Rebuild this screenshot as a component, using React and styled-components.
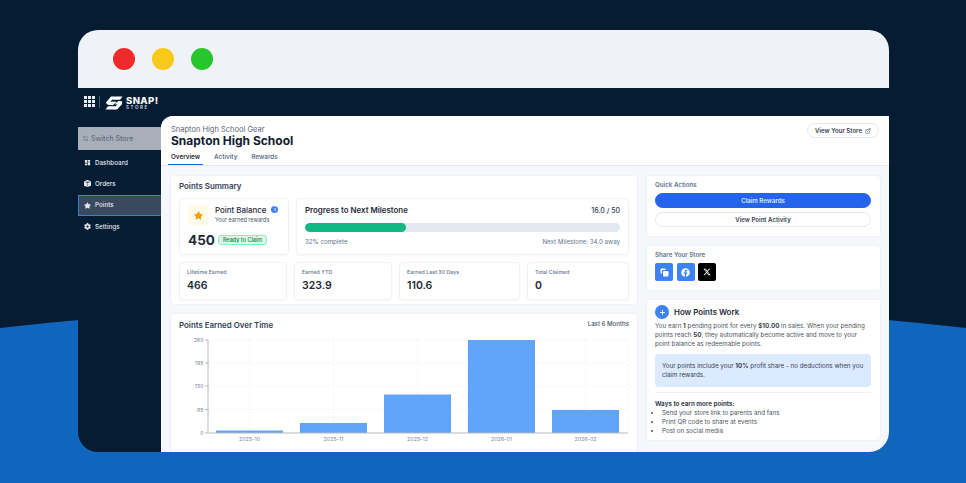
import React from 'react';
import styled, { createGlobalStyle } from 'styled-components';
import { ArrowLeftRight, ExternalLink, Plus } from 'lucide-react';
import { FaStar, FaCog, FaFacebook } from 'react-icons/fa';
import { FaXTwitter } from 'react-icons/fa6';
import { MdDashboard } from 'react-icons/md';
import { BsBoxSeamFill } from 'react-icons/bs';

const GlobalStyle = createGlobalStyle`
  html, body { margin: 0; padding: 0; height: 100%; overflow: hidden; }
  body { background: #051c33; font-family: Inter, "Liberation Sans", sans-serif; color: #1f2937; }
  * { box-sizing: border-box; }
`;

const Page = styled.div`
  position: relative;
  width: 966px;
  height: 483px;
  padding: 30px 77px 31px 78px;
  overflow: hidden;
`;

const Wave = styled.svg`
  position: absolute;
  left: 0;
  bottom: 0;
`;

const Window = styled.div`
  position: relative;
  height: 100%;
  display: flex;
  flex-direction: column;
  border-radius: 20px;
  overflow: hidden;
  background: #051c33;
`;

const TitleBar = styled.div`
  height: 58px;
  flex: none;
  display: flex;
  align-items: center;
  gap: 17px;
  padding-left: 35px;
  background: #eff3f8;
`;

const Dot = styled.span`
  width: 22px;
  height: 22px;
  border-radius: 50%;
  background: ${p => p.$color};
`;

const TopNav = styled.div`
  height: 28px;
  flex: none;
  display: flex;
  align-items: center;
  padding: 2px 0 0 6px;
  color: #fff;
`;

const GridIcon = styled.div`
  display: grid;
  grid-template-columns: repeat(3, 3px);
  grid-auto-rows: 3px;
  gap: 1px;
  margin-top: -3px;
  span { background: #e8edf3; }
`;

const Divider = styled.span`
  width: 1px;
  height: 12px;
  margin: -3px 5px 0 4px;
  background: #47586b;
`;

const BrandText = styled.div`
  display: flex;
  flex-direction: column;
  margin-left: 3px;
  line-height: 1;
`;

const BrandName = styled.span`
  font-size: 9.5px;
  font-weight: 800;
  letter-spacing: 0.4px;
`;

const BrandSub = styled.span`
  margin-top: 1px;
  font-size: 4.5px;
  font-weight: 600;
  letter-spacing: 1.6px;
  color: #d5dce4;
`;

const Main = styled.div`
  flex: 1;
  min-height: 0;
  display: flex;
`;

const Sidebar = styled.nav`
  width: 83px;
  flex: none;
  display: flex;
  flex-direction: column;
  padding-top: 11px;
`;

const SwitchStore = styled.div`
  height: 23px;
  margin-bottom: 2px;
  display: flex;
  align-items: center;
  gap: 2px;
  padding-left: 4px;
  background: #a9afb9;
  color: #626d7c;
  font-size: 7px;
  font-weight: 500;
`;

const NavItem = styled.div`
  height: 21.3px;
  display: flex;
  align-items: center;
  gap: 4px;
  padding-left: 5px;
  color: #e3e8ee;
  font-size: 6.3px;
  font-weight: 500;
  background: ${p => (p.$active ? '#3a4a5e' : 'transparent')};
  border: ${p => (p.$active ? '1px solid #3f7fd1' : '1px solid transparent')};
  border-right-color: transparent;
`;

const Content = styled.div`
  flex: 1;
  min-width: 0;
  display: flex;
  flex-direction: column;
  background: #f5f7fb;
  border-top-left-radius: 12px;
  overflow: hidden;
`;

const Header = styled.header`
  position: relative;
  height: 50px;
  flex: none;
  padding: 8.5px 0 0 10px;
  background: #fff;
  border-bottom: 1px solid #e5e9ef;
`;

const StoreGroup = styled.div`
  font-size: 7.5px;
  line-height: 9px;
  color: #5c6675;
`;

const StoreName = styled.h1`
  margin: 0;
  font-size: 12px;
  line-height: 14px;
  font-weight: 700;
  color: #111c30;
`;

const Tabs = styled.div`
  display: flex;
  gap: 8px;
  margin: 3px 0 0 -3px;
`;

const Tab = styled.div`
  height: 14.5px;
  padding: 0 3px;
  font-size: 6.3px;
  line-height: 12px;
  font-weight: 600;
  color: ${p => (p.$active ? '#1f2937' : '#64748b')};
  border-bottom: ${p => (p.$active ? '1px solid #2563eb' : 'none')};
`;

const StoreButton = styled.button`
  position: absolute;
  top: 7px;
  right: 10px;
  height: 15px;
  padding: 0 7px;
  display: flex;
  align-items: center;
  gap: 3px;
  border: 1px solid #e3e7ee;
  border-radius: 8px;
  background: #fff;
  color: #374151;
  font: 600 6.1px Inter, sans-serif;
`;

const Body = styled.div`
  flex: 1;
  min-height: 0;
  display: grid;
  grid-template-columns: 468px 235px;
  gap: 8px;
  padding: 9px 8px 0 9px;
`;

const Column = styled.div`
  display: flex;
  flex-direction: column;
  gap: 8px;
  min-height: 0;
`;

const Card = styled.section`
  flex: none;
  background: #fff;
  border: 1px solid #eef1f6;
  border-radius: 4px;
  padding: ${p => p.$padding || '5px 8px'};
  height: ${p => p.$height || 'auto'};
`;

const CardTitle = styled.h2`
  margin: 0;
  font-size: 7.9px;
  line-height: 10px;
  font-weight: 600;
  color: #334155;
`;

const TopRow = styled.div`
  display: grid;
  grid-template-columns: 110px 1fr;
  gap: 7px;
  margin-top: 7px;
`;

const Panel = styled.div`
  height: 57px;
  background: #fff;
  border: 1px solid #f0f2f6;
  border-radius: 4px;
  box-shadow: 0 1px 2px rgba(30, 50, 80, 0.04);
`;

const BalancePanel = styled(Panel)`
  padding: 6px 8px;
`;

const BalanceHead = styled.div`
  display: flex;
  gap: 7px;
`;

const StarTile = styled.div`
  width: 20px;
  height: 20px;
  display: flex;
  align-items: center;
  justify-content: center;
  background: #fefae8;
  border-radius: 3px;
  color: #f59e0b;
`;

const BalanceTitle = styled.div`
  display: flex;
  align-items: center;
  gap: 5px;
  font-size: 7.9px;
  line-height: 11px;
  font-weight: 500;
  color: #1f2937;
  white-space: nowrap;
`;

const InfoDot = styled.span`
  width: 7px;
  height: 7px;
  margin-top: -3px;
  border-radius: 50%;
  background: #3b82f6;
  color: #fff;
  font-size: 5px;
  line-height: 7px;
  font-weight: 700;
  text-align: center;
`;

const BalanceSub = styled.div`
  font-size: 5.5px;
  line-height: 8px;
  color: #475569;
  white-space: nowrap;
`;

const BalanceRow = styled.div`
  display: flex;
  align-items: center;
  gap: 3px;
  margin-top: 7px;
`;

const BalanceValue = styled.span`
  font-size: 13.5px;
  line-height: 16px;
  font-weight: 700;
  color: #1f2937;
`;

const ReadyBadge = styled.span`
  height: 10px;
  padding: 0 4px;
  border: 1px solid #86efbe;
  border-radius: 3px;
  background: #d8fbe7;
  color: #15803d;
  font-size: 5.5px;
  line-height: 8px;
  font-weight: 500;
  white-space: nowrap;
`;

const ProgressPanel = styled(Panel)`
  padding: 5px 8px;
`;

const SpreadRow = styled.div`
  display: flex;
  justify-content: space-between;
  align-items: center;
`;

const ProgressTitle = styled.span`
  font-size: 7.9px;
  line-height: 10px;
  font-weight: 600;
  color: #1f2937;
`;

const ProgressCount = styled.span`
  font-size: 7px;
  line-height: 10px;
  padding-top: 2px;
  font-weight: 500;
  color: #334155;
`;

const Track = styled.div`
  height: 9px;
  margin: 7px 0 6px;
  border-radius: 5px;
  background: #e2e8f0;
  overflow: hidden;
`;

const Fill = styled.div`
  height: 100%;
  border-radius: 5px;
  background: #10b981;
`;

const SmallMuted = styled.span`
  font-size: 6.2px;
  line-height: 8px;
  color: #64748b;
`;

const StatRow = styled.div`
  display: grid;
  grid-template-columns: 108px 98px 121px 102px;
  gap: 7px;
  margin-top: 7px;
`;

const Stat = styled.div`
  height: 38px;
  padding: 5px 7px;
  background: #fff;
  border: 1px solid #f0f2f6;
  border-radius: 4px;
  box-shadow: 0 1px 2px rgba(30, 50, 80, 0.04);
`;

const StatLabel = styled.div`
  font-size: 5.3px;
  line-height: 8px;
  font-weight: 500;
  color: #64748b;
`;

const StatValue = styled.div`
  margin-top: 1.5px;
  font-size: 10.5px;
  line-height: 15px;
  font-weight: 600;
  color: #1f2937;
`;

const SideLabel = styled.h3`
  margin: 0;
  font-size: 6.2px;
  line-height: 8px;
  font-weight: 600;
  color: #64748b;
`;

const ActionButton = styled.button`
  display: block;
  width: 100%;
  height: 15px;
  margin-top: 4px;
  border-radius: 8px;
  border: 1px solid ${p => (p.$primary ? '#2563eb' : '#e5e8ee')};
  background: ${p => (p.$primary ? '#2563eb' : '#fff')};
  color: ${p => (p.$primary ? '#dbe7ff' : '#374151')};
  font: 600 6.1px Inter, sans-serif;
`;

const ShareRow = styled.div`
  display: flex;
  gap: 3.5px;
  margin-top: 4px;
`;

const ShareButton = styled.span`
  width: 18px;
  height: 18px;
  display: flex;
  align-items: center;
  justify-content: center;
  border-radius: 2px;
  color: #fff;
  background: ${p => p.$bg};
`;

const HowHead = styled.div`
  display: flex;
  align-items: center;
  gap: 5px;
`;

const HowIcon = styled.span`
  width: 14px;
  height: 14px;
  display: flex;
  align-items: center;
  justify-content: center;
  border-radius: 50%;
  background: #3b82f6;
  color: #fff;
`;

const HowTitle = styled.span`
  font-size: 7.9px;
  font-weight: 600;
  color: #1f2937;
`;

const Para = styled.p`
  margin: 2.5px 0 0;
  font-size: 6.25px;
  line-height: 9px;
  color: #4b5563;
  b { font-weight: 700; color: #374151; }
`;

const Callout = styled.div`
  margin-top: 5.5px;
  padding: 0 7px;
  height: 33px;
  border-radius: 4px;
  background: #dbeafe;
  font-size: 6.25px;
  line-height: 9px;
  color: #374151;
  display: flex;
  align-items: center;
  b { font-weight: 700; }
`;

const Rule = styled.hr`
  margin: 5px 0 6.5px;
  border: 0;
  border-top: 1px solid #eef1f5;
`;

const WaysTitle = styled.div`
  font-size: 6.25px;
  line-height: 9px;
  font-weight: 700;
  color: #374151;
`;

const WaysList = styled.ul`
  margin: 0;
  padding: 0 0 0 7px;
  font-size: 6.25px;
  line-height: 9px;
  color: #4b5563;
`;

const ChartHead = styled.div`
  display: flex;
  justify-content: space-between;
  align-items: flex-start;
`;

const Range = styled.span`
  font-size: 6.1px;
  line-height: 8px;
  font-weight: 500;
  color: #475569;
`;

const ChartSvg = styled.svg`
  display: block;
  margin: 0 0 0 -9px;
  text {
    font-family: Inter, sans-serif;
    font-size: 5.3px;
    fill: #7b8494;
  }
`;

const ticks = [
  { label: '260', y: 10 },
  { label: '195', y: 33 },
  { label: '130', y: 56 },
  { label: '65', y: 79.5 },
  { label: '0', y: 103 },
];

const bars = [
  { label: '2025-10', x: 46, top: 100.5 },
  { label: '2025-11', x: 130, top: 93 },
  { label: '2025-12', x: 214, top: 64.5 },
  { label: '2026-01', x: 298, top: 10 },
  { label: '2026-02', x: 382, top: 80 },
];

const PointsChart = () => (
  <ChartSvg width="466" height="125" viewBox="0 0 466 125">
    {ticks.slice(0, 4).map(t => (
      <line key={t.label} x1="38" x2="458" y1={t.y} y2={t.y} stroke="#f0f2f5" strokeDasharray="2 2" />
    ))}
    {[79.5, 163.5, 247.5, 331.5, 415.5, 458].map(x => (
      <line key={x} x1={x} x2={x} y1="10" y2="103" stroke="#f0f2f5" strokeDasharray="2 2" />
    ))}
    {bars.map(b => (
      <rect key={b.label} x={b.x} y={b.top} width="67" height={103 - b.top} fill="#60a5fa" />
    ))}
    <line x1="38" x2="38" y1="10" y2="103" stroke="#b5b9c0" />
    <line x1="38" x2="458" y1="103" y2="103" stroke="#b5b9c0" />
    {ticks.map(t => (
      <g key={t.label}>
        <line x1="35" x2="38" y1={t.y} y2={t.y} stroke="#b5b9c0" />
        <text x="33.5" y={t.y + 2} textAnchor="end">{t.label}</text>
      </g>
    ))}
    {bars.map(b => (
      <text key={b.label} x={b.x + 33.5} y="111" textAnchor="middle">{b.label}</text>
    ))}
  </ChartSvg>
);

const SnapMark = () => (
  <svg width="18" height="14" viewBox="0 0 18 14" fill="#fff">
    <path d="M6 0.5h11.5L15 3.8H7.2L5.2 5.6l6.5 0.2 L7.8 9.2 L2.8 8.8 L0.8 6.8 Z" />
    <path d="M17.2 5.2 L17 8.2 L12 13.5 H0.5 L3 10.2 H10.6 L12.5 8.4 L9.6 8.2 L13.4 4.9 Z" />
  </svg>
);

const CopyMark = () => (
  <svg width="9" height="9" viewBox="0 0 9 9" fill="#fff">
    <path d="M1.4 0.5h3.4c.5 0 .9.4.9.9v.5H3.2c-.8 0-1.3.5-1.3 1.3v2.5h-.5c-.5 0-.9-.4-.9-.9V1.4c0-.5.4-.9.9-.9z" />
    <rect x="3" y="3" width="5.5" height="5.5" rx="1" />
  </svg>
);

export default function App() {
  return (
    <Page>
      <GlobalStyle />
      <Wave width="966" height="165" viewBox="0 0 966 165">
        <path d="M0 10 Q483 -44 966 10 V165 H0 Z" fill="#1066bd" />
      </Wave>
      <Window>
        <TitleBar>
          <Dot $color="#ee2a2a" />
          <Dot $color="#f8c918" />
          <Dot $color="#27c62d" />
        </TitleBar>
        <TopNav>
          <GridIcon>
            {Array.from({ length: 9 }).map((_, i) => <span key={i} />)}
          </GridIcon>
          <Divider />
          <SnapMark />
          <BrandText>
            <BrandName>SNAP!</BrandName>
            <BrandSub>STORE</BrandSub>
          </BrandText>
        </TopNav>
        <Main>
          <Sidebar>
            <SwitchStore><ArrowLeftRight size={7} />Switch Store</SwitchStore>
            <NavItem><MdDashboard size={7} />Dashboard</NavItem>
            <NavItem><BsBoxSeamFill size={7} />Orders</NavItem>
            <NavItem $active><FaStar size={7} />Points</NavItem>
            <NavItem><FaCog size={7} />Settings</NavItem>
          </Sidebar>
          <Content>
            <Header>
              <StoreGroup>Snapton High School Gear</StoreGroup>
              <StoreName>Snapton High School</StoreName>
              <Tabs>
                <Tab $active>Overview</Tab>
                <Tab>Activity</Tab>
                <Tab>Rewards</Tab>
              </Tabs>
              <StoreButton>View Your Store <ExternalLink size={6} /></StoreButton>
            </Header>
            <Body>
              <Column>
                <Card $height="130px">
                  <CardTitle>Points Summary</CardTitle>
                  <TopRow>
                    <BalancePanel>
                      <BalanceHead>
                        <StarTile><FaStar size={9} /></StarTile>
                        <div>
                          <BalanceTitle>Point Balance <InfoDot>i</InfoDot></BalanceTitle>
                          <BalanceSub>Your earned rewards</BalanceSub>
                        </div>
                      </BalanceHead>
                      <BalanceRow>
                        <BalanceValue>450</BalanceValue>
                        <ReadyBadge>Ready to Claim</ReadyBadge>
                      </BalanceRow>
                    </BalancePanel>
                    <ProgressPanel>
                      <SpreadRow>
                        <ProgressTitle>Progress to Next Milestone</ProgressTitle>
                        <ProgressCount>16.0 / 50</ProgressCount>
                      </SpreadRow>
                      <Track><Fill style={{ width: '32%' }} /></Track>
                      <SpreadRow>
                        <SmallMuted>32% complete</SmallMuted>
                        <SmallMuted>Next Milestone: 34.0 away</SmallMuted>
                      </SpreadRow>
                    </ProgressPanel>
                  </TopRow>
                  <StatRow>
                    <Stat><StatLabel>Lifetime Earned</StatLabel><StatValue>466</StatValue></Stat>
                    <Stat><StatLabel>Earned YTD</StatLabel><StatValue>323.9</StatValue></Stat>
                    <Stat><StatLabel>Earned Last 30 Days</StatLabel><StatValue>110.6</StatValue></Stat>
                    <Stat><StatLabel>Total Claimed</StatLabel><StatValue>0</StatValue></Stat>
                  </StatRow>
                </Card>
                <Card $padding="6px 8px 0">
                  <ChartHead>
                    <CardTitle>Points Earned Over Time</CardTitle>
                    <Range>Last 6 Months</Range>
                  </ChartHead>
                  <PointsChart />
                </Card>
              </Column>
              <Column>
                <Card $height="62px" $padding="5px 9px 5px 8px">
                  <SideLabel>Quick Actions</SideLabel>
                  <ActionButton $primary>Claim Rewards</ActionButton>
                  <ActionButton>View Point Activity</ActionButton>
                </Card>
                <Card $height="46px">
                  <SideLabel>Share Your Store</SideLabel>
                  <ShareRow>
                    <ShareButton $bg="#3b82f6"><CopyMark /></ShareButton>
                    <ShareButton $bg="#3b82f6"><FaFacebook size={9} /></ShareButton>
                    <ShareButton $bg="#000"><FaXTwitter size={8} /></ShareButton>
                  </ShareRow>
                </Card>
                <Card $height="142px" $padding="5px 9px 5px 8px">
                  <HowHead>
                    <HowIcon><Plus size={7} strokeWidth={3} /></HowIcon>
                    <HowTitle>How Points Work</HowTitle>
                  </HowHead>
                  <Para>You earn <b>1</b> pending point for every <b>$10.00</b> in sales. When your pending points reach <b>50</b>, they automatically become active and move to your point balance as redeemable points.</Para>
                  <Callout><span>Your points include your <b>10%</b> profit share - no deductions when you claim rewards.</span></Callout>
                  <Rule />
                  <WaysTitle>Ways to earn more points:</WaysTitle>
                  <WaysList>
                    <li>Send your store link to parents and fans</li>
                    <li>Print QR code to share at events</li>
                    <li>Post on social media</li>
                  </WaysList>
                </Card>
              </Column>
            </Body>
          </Content>
        </Main>
      </Window>
    </Page>
  );
}
